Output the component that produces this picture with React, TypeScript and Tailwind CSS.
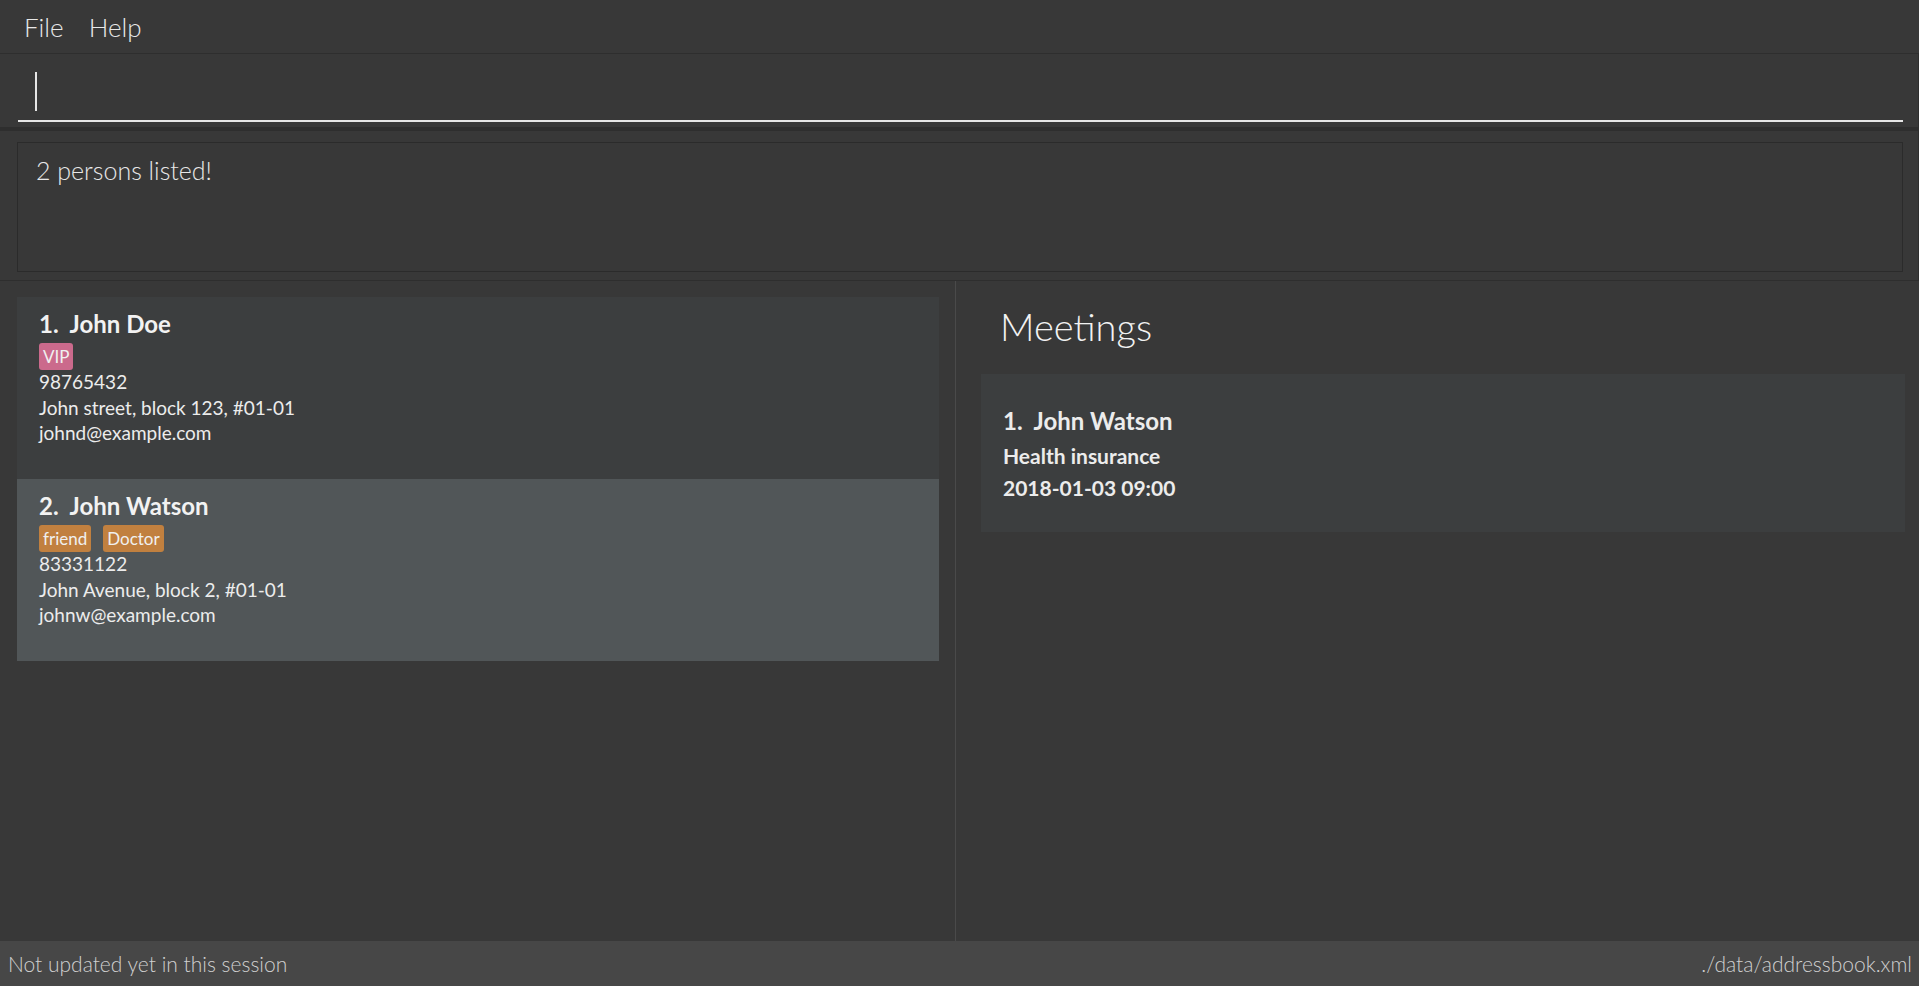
import React from "react";

const font = { fontFamily: "Lato, 'Open Sans', 'Noto Sans', sans-serif" };

function Tag({ label, color }: { label: string; color: string }) {
  return (
    <span
      className={`inline-block rounded-[3px] px-[4px] text-[17px] leading-[27px] text-[#f0f0f0] ${color}`}
    >
      {label}
    </span>
  );
}

function PersonCard({
  idx,
  name,
  tags,
  phone,
  address,
  email,
  selected,
}: {
  idx: number;
  name: string;
  tags: { label: string; color: string }[];
  phone: string;
  address: string;
  email: string;
  selected?: boolean;
}) {
  return (
    <div
      className={`h-[182px] pl-[22px] pt-[12px] ${selected ? "bg-[#515658]" : "bg-[#3c3e3f]"}`}
    >
      <div className="text-[24px] font-bold leading-[30px] text-[#f2f2f2]">
        {idx}.&nbsp;&nbsp;{name}
      </div>
      <div className="mt-[4px] flex gap-[12px]">
        {tags.map((t) => (
          <Tag key={t.label} label={t.label} color={t.color} />
        ))}
      </div>
      <div className="-mt-[1px] text-[19px] leading-[25.5px] text-[#ececec]">
        <div>{phone}</div>
        <div>{address}</div>
        <div>{email}</div>
      </div>
    </div>
  );
}

export default function App() {
  return (
    <div style={font} className="flex h-[986px] w-full flex-col overflow-hidden bg-[#383838]">
      {/* Menu bar */}
      <div className="flex h-[54px] shrink-0 items-center gap-[25px] border-b border-[#2e2e2e] pl-[24px] pt-[2px] text-[26px] font-light text-[#e8e8e8]">
        <span>File</span>
        <span>Help</span>
      </div>

      {/* Command box */}
      <div className="h-[77px] shrink-0 border-b-[4px] border-r border-[#2e2e2e] pl-[18px] pr-[15px] pt-[18px]">
        <div className="flex h-[50px] items-start border-b-[2px] border-[#e6e6e6] pl-[17px]">
          <div className="h-[39px] w-[2px] bg-[#e6e6e6]" />
        </div>
      </div>

      {/* Result display */}
      <div className="h-[150px] shrink-0 border-b border-r border-[#2e2e2e] pl-[17px] pr-[15px] pt-[11px]">
        <div className="h-[130px] border border-[#2b2b2b] bg-[#383838] pl-[18px] pt-[10px] text-[25px] font-light leading-[34px] text-[#e8e8e8]">
          2 persons listed!
        </div>
      </div>

      {/* Split */}
      <div className="flex min-h-0 flex-1">
        <div className="w-[955px] shrink-0 pl-[17px] pr-[16px] pt-[16px]">
          <PersonCard
            idx={1}
            name="John Doe"
            tags={[{ label: "VIP", color: "bg-[#cb6a8c]" }]}
            phone="98765432"
            address="John street, block 123, #01-01"
            email="johnd@example.com"
          />
          <PersonCard
            idx={2}
            name="John Watson"
            tags={[
              { label: "friend", color: "bg-[#c1803f]" },
              { label: "Doctor", color: "bg-[#c1803f]" },
            ]}
            phone="83331122"
            address="John Avenue, block 2, #01-01"
            email="johnw@example.com"
            selected
          />
        </div>
        <div className="w-[1px] shrink-0 bg-[#4a4a4a]" />
        <div className="flex-1 pl-[25px] pr-[14px] pt-[22px]">
          <div className="pl-[19px] text-[38px] font-light leading-[46px] text-[#f2f2f2]">
            Meetings
          </div>
          <div className="mt-[25px] h-[158px] bg-[#3c3e3f] pl-[22px] pt-[32px]">
            <div className="text-[24px] font-bold leading-[30px] text-[#ececec]">
              1.&nbsp;&nbsp;John Watson
            </div>
            <div className="mt-[5px] text-[21px] font-bold leading-[30px] text-[#ececec]">
              Health insurance
            </div>
            <div className="mt-[2px] text-[21px] font-bold leading-[30px] text-[#ececec]">
              2018-01-03 09:00
            </div>
          </div>
        </div>
      </div>

      {/* Status bar */}
      <div className="flex h-[45px] shrink-0 items-center justify-between bg-[#474747] pl-[8px] pr-[7px] text-[21px] font-light text-[#d0d0d0]">
        <span>Not updated yet in this session</span>
        <span>./data/addressbook.xml</span>
      </div>
    </div>
  );
}
